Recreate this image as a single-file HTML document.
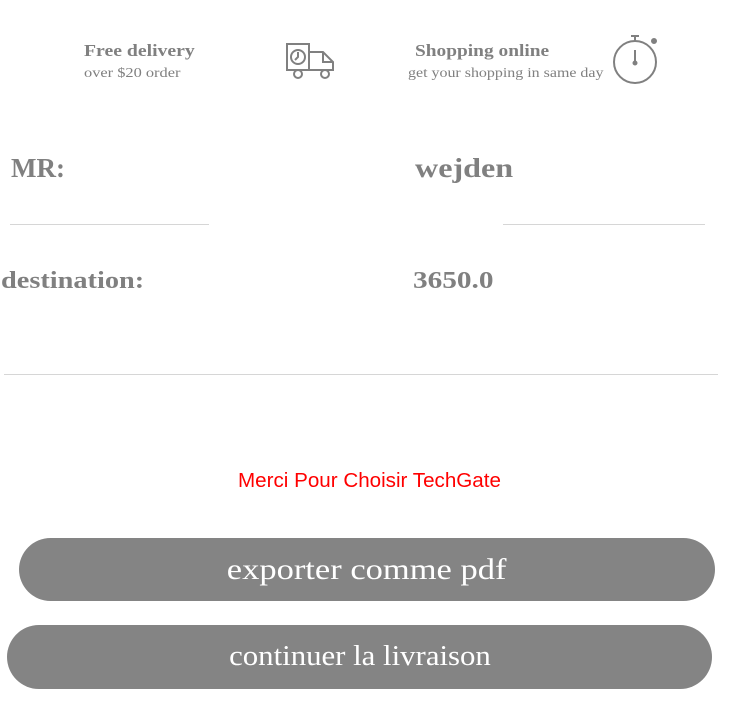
<!DOCTYPE html>
<html><head><style>
body{margin:0;width:735px;height:710px;background:#fff;font-family:"Liberation Serif",serif;color:#808080;position:relative;overflow:hidden}
.a{position:absolute;white-space:nowrap;transform-origin:0 0}
.b{font-weight:bold}
.line{position:absolute;height:1px;background:#d6d6d6}
.btn{position:absolute;background:#848484;color:#fff;border-radius:32px;text-align:center;font-size:30px}
.btn span{display:inline-block}
</style></head><body>
<div class="a b" style="left:84px;top:41px;font-size:17px;transform:scaleX(1.16)">Free delivery</div>
<div class="a" style="left:84px;top:66px;font-size:14px;transform:scaleX(1.17)">over $20 order</div>
<svg class="a" style="left:285px;top:42px" width="52" height="38" viewBox="0 0 52 38" fill="none" stroke="#808080" stroke-width="2">
<rect x="2" y="2" width="22" height="26"/><circle cx="13" cy="15" r="7"/><path d="M13 10v5l-3 3"/>
<path d="M24 10h14l10 10v8h-24"/><path d="M38 10v10h10"/>
<circle cx="13" cy="32" r="4" fill="#fff"/><circle cx="40" cy="32" r="4" fill="#fff"/></svg>
<div class="a b" style="left:415px;top:41px;font-size:17px;transform:scaleX(1.14)">Shopping online</div>
<div class="a" style="left:408px;top:66px;font-size:14px;transform:scaleX(1.14)">get your shopping in same day</div>
<svg class="a" style="left:611px;top:34px" width="50" height="54" viewBox="0 0 50 54" fill="none" stroke="#808080" stroke-width="2">
<circle cx="24" cy="28" r="21"/><path d="M24 2v5M20 2h8"/><path d="M24 16v14"/><circle cx="24" cy="29" r="1.5" fill="#808080"/><circle cx="43" cy="7" r="2" fill="#808080"/></svg>
<div class="a b" style="left:11px;top:153px;font-size:27px">MR:</div>
<div class="a b" style="left:415px;top:153px;font-size:27px;transform:scaleX(1.19)">wejden</div>
<div class="line" style="left:10px;top:224px;width:199px"></div>
<div class="line" style="left:503px;top:224px;width:202px"></div>
<div class="a b" style="left:1px;top:268px;font-size:24px;transform:scaleX(1.18)">destination:</div>
<div class="a b" style="left:413px;top:268px;font-size:24px;transform:scaleX(1.22)">3650.0</div>
<div class="line" style="left:4px;top:374px;width:714px"></div>
<div class="a" style="left:238px;top:470px;font-family:'Liberation Sans',sans-serif;font-size:20px;color:#f00;transform:scaleX(1.03)">Merci Pour Choisir TechGate</div>
<div class="btn" style="left:19px;top:538px;width:696px;height:63px;line-height:63px"><span style="transform:scaleX(1.15)">exporter comme pdf</span></div>
<div class="btn" style="left:7px;top:625px;width:705px;height:64px;line-height:64px;font-size:28px;text-indent:0"><span style="transform:scaleX(1.1)">continuer la livraison</span></div>
</body></html>
